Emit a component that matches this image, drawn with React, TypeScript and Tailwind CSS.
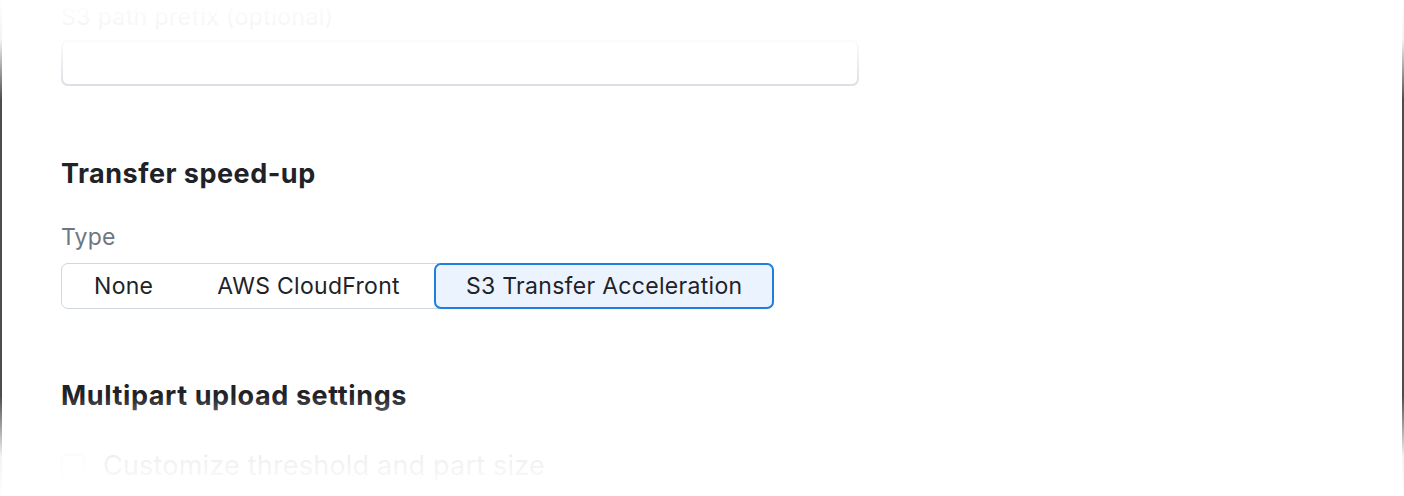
import { useState } from "react";

const options = ["None", "AWS CloudFront", "S3 Transfer Acceleration"];

function SegmentedControl({
  value,
  onChange,
}: {
  value: string;
  onChange: (v: string) => void;
}) {
  return (
    <div className="inline-flex h-[46px] rounded-[7px] border border-[#d0d7de] bg-white">
      {options.map((opt) => {
        const selected = opt === value;
        return (
          <button
            key={opt}
            onClick={() => onChange(opt)}
            className={
              selected
                ? "-my-px -mr-px ml-[2px] rounded-[7px] border-2 border-[#1f7fe0] bg-[#ebf4fe] px-[30px] text-[23px] tracking-[0.3px] text-[#1f2328]"
                : "px-8 text-[23px] tracking-[0.3px] text-[#1f2328]"
            }
          >
            {opt}
          </button>
        );
      })}
    </div>
  );
}

export default function App() {
  const [type, setType] = useState("S3 Transfer Acceleration");
  const [custom, setCustom] = useState(false);

  return (
    <div
      className="relative h-[496px] w-[1404px] overflow-hidden bg-white"
      style={{ fontFamily: "Inter, 'Noto Sans', sans-serif" }}
    >
      <div className="h-full border-x-2 border-[#4d4d4d] pl-[59px]">
        <label className="block pt-[2px] text-[23px] leading-[30px] tracking-[0.4px] text-[#1f2328]">
          S3 path prefix (optional)
        </label>
        <input
          type="text"
          className="mt-2 block h-[46px] w-[798px] rounded-[7px] border-2 border-[#d0d7de] bg-white px-3 text-[23px] outline-none"
        />

        <h2 className="mt-[72px] text-[27px] font-bold leading-8 tracking-[0.5px] text-[#1f2328]">
          Transfer speed-up
        </h2>
        <div className="mt-8 text-[23px] leading-[30px] tracking-[0.2px] text-[#6e7781]">
          Type
        </div>
        <div className="mt-[11px]">
          <SegmentedControl value={type} onChange={setType} />
        </div>

        <h2 className="mt-[71px] text-[27px] font-bold leading-8 tracking-[0.6px] text-[#1f2328]">
          Multipart upload settings
        </h2>
        <label className="mt-[39px] flex h-[30px] items-center gap-[18px] text-[27px] tracking-[0.2px] text-[#1f2328]">
          <input
            type="checkbox"
            checked={custom}
            onChange={(e) => setCustom(e.target.checked)}
            className="h-6 w-6 shrink-0 appearance-none rounded-[5px] border-2 border-[#d0d7de] bg-white"
          />
          Customize threshold and part size
        </label>
      </div>

      {/* fade at the top and bottom of the scroll area */}
      <div className="pointer-events-none absolute inset-x-0 top-0 h-[100px] bg-[linear-gradient(to_bottom,#fff_0px,rgba(255,255,255,0.93)_40px,rgba(255,255,255,0)_100px)]" />
      <div className="pointer-events-none absolute inset-x-0 bottom-0 h-[100px] bg-[linear-gradient(to_top,#fff_0px,rgba(255,255,255,0.93)_40px,rgba(255,255,255,0)_100px)]" />
    </div>
  );
}
